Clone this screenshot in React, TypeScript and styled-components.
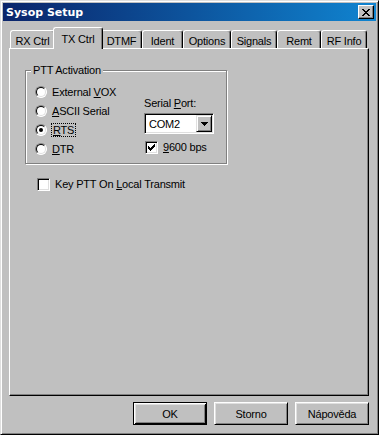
import styled, { createGlobalStyle } from 'styled-components';

const GlobalStyle = createGlobalStyle`
  html, body {
    margin: 0;
    padding: 0;
    background: #c0c0c0;
  }
  body {
    font-family: 'Liberation Sans', Arial, sans-serif;
    font-size: 11px;
    letter-spacing: -0.2px;
    color: #000;
  }
  * {
    box-sizing: border-box;
  }
`;

const tabs = [
  { label: 'RX Ctrl', width: 45 },
  { label: 'TX Ctrl', width: 46, active: true },
  { label: 'DTMF', width: 41 },
  { label: 'Ident', width: 41 },
  { label: 'Options', width: 48 },
  { label: 'Signals', width: 46 },
  { label: 'Remt', width: 44 },
  { label: 'RF Info', width: 46 }
];

const CheckMark = () => (
  <svg width='7' height='7' viewBox='0 0 7 7' shapeRendering='crispEdges'>
    <path d='M6 0h1v3h-1v1h-1v1h-1v1h-1v1h-1v-1h-1v-1h-1v-3h1v1h1v1h1v-1h1v-1h1z' fill='#000' />
  </svg>
);

const App: React.FC = () => {
  return (
    <>
      <GlobalStyle />
      <Window>
        <TitleBar>
          <span>Sysop Setup</span>
          <CloseButton>
            <svg width='8' height='7' viewBox='0 0 8 7' shapeRendering='crispEdges'>
              <path
                d='M0 0h2v1h1v1h2v-1h1v-1h2v1h-1v1h-1v1h-1v1h1v1h1v1h1v1h-2v-1h-1v-1h-2v1h-1v1h-2v-1h1v-1h1v-1h1v-1h-1v-1h-1v-1h-1z'
                fill='#000'
              />
            </svg>
          </CloseButton>
        </TitleBar>
        <Body>
          <TabRow>
            {tabs.map((t) => (
              <Tab key={t.label} $width={t.width} $active={t.active}>
                {t.label}
              </Tab>
            ))}
          </TabRow>
          <Panel>
            <GroupBox>
              <Legend>PTT Activation</Legend>
              <GroupBody>
                <RadioList>
                  <Option>
                    <RadioMark />
                    <span>
                      External <Mnemonic>V</Mnemonic>OX
                    </span>
                  </Option>
                  <Option>
                    <RadioMark />
                    <span>
                      <Mnemonic>A</Mnemonic>SCII Serial
                    </span>
                  </Option>
                  <Option>
                    <RadioMark $checked />
                    <Focused>
                      <Mnemonic>R</Mnemonic>TS
                    </Focused>
                  </Option>
                  <Option>
                    <RadioMark />
                    <span>
                      <Mnemonic>D</Mnemonic>TR
                    </span>
                  </Option>
                </RadioList>
                <PortColumn>
                  <FieldLabel>
                    Serial <Mnemonic>P</Mnemonic>ort:
                  </FieldLabel>
                  <Combo>
                    <ComboValue>COM2</ComboValue>
                    <ComboButton>
                      <svg width='7' height='4' viewBox='0 0 7 4' shapeRendering='crispEdges'>
                        <path d='M0 0h7v1h-1v1h-1v1h-1v1h-1v-1h-1v-1h-1v-1h-1z' fill='#000' />
                      </svg>
                    </ComboButton>
                  </Combo>
                  <CheckRow $indent={1} $top={6}>
                    <CheckBox>
                      <CheckMark />
                    </CheckBox>
                    <span>
                      <Mnemonic>9</Mnemonic>600 bps
                    </span>
                  </CheckRow>
                </PortColumn>
              </GroupBody>
            </GroupBox>
            <CheckRow $indent={12} $top={13}>
              <CheckBox />
              <span>
                Key PTT On <Mnemonic>L</Mnemonic>ocal Transmit
              </span>
            </CheckRow>
          </Panel>
          <ButtonRow>
            <Button $default>OK</Button>
            <Button>Storno</Button>
            <Button>Nápověda</Button>
          </ButtonRow>
        </Body>
      </Window>
    </>
  );
};

export default App;

const Window = styled.div`
  width: 379px;
  height: 435px;
  display: flex;
  flex-direction: column;
  padding: 2px;
  background: #c0c0c0;
  border: 1px solid;
  border-color: #dfdfdf #000 #000 #dfdfdf;
  box-shadow: inset 1px 1px #fff, inset -1px -1px #808080;
`;

const TitleBar = styled.div`
  height: 18px;
  flex: none;
  display: flex;
  align-items: center;
  justify-content: space-between;
  padding: 0 2px 0 3px;
  background: linear-gradient(to right, #0a246a, #1084d0);
  color: #fff;
  font-family: 'DejaVu Sans', 'Liberation Sans', sans-serif;
  font-weight: bold;
  font-size: 11px;
  letter-spacing: 0;
`;

const CloseButton = styled.div`
  width: 16px;
  height: 14px;
  display: flex;
  align-items: center;
  justify-content: center;
  background: #c0c0c0;
  border: 1px solid;
  border-color: #fff #000 #000 #fff;
  box-shadow: inset -1px -1px #808080;
`;

const Body = styled.div`
  flex: 1;
  display: flex;
  flex-direction: column;
  padding: 6px 7px 7px 6px;
`;

const TabRow = styled.div`
  height: 21px;
  flex: none;
  display: flex;
  align-items: flex-end;
  padding-left: 1px;
  position: relative;
  z-index: 1;
`;

const Tab = styled.div<{ $width: number; $active?: boolean }>`
  width: ${(p) => p.$width + (p.$active ? 4 : 0)}px;
  height: ${(p) => (p.$active ? 22 : 18)}px;
  margin: 0 ${(p) => (p.$active ? -2 : 0)}px ${(p) => (p.$active ? -1 : 0)}px;
  padding-top: ${(p) => (p.$active ? 0 : 2)}px;
  display: flex;
  align-items: center;
  justify-content: center;
  background: #c0c0c0;
  border: 1px solid;
  border-bottom: none;
  border-color: #fff #000 #000 #fff;
  border-radius: 3px 3px 0 0;
  box-shadow: inset -1px 0 #808080;
  position: relative;
  z-index: ${(p) => (p.$active ? 2 : 1)};
  white-space: nowrap;
`;

const Panel = styled.div`
  flex: 1;
  display: flex;
  flex-direction: column;
  align-items: flex-start;
  padding: 15px 0 0 15px;
  border: 1px solid;
  border-color: #fff #000 #000 #fff;
  box-shadow: inset -1px -1px #808080;
`;

const GroupBox = styled.fieldset`
  width: 202px;
  margin: 0;
  padding: 0;
  border: 1px solid #808080;
  box-shadow: 1px 1px 0 #fff, inset 1px 1px 0 #fff;
  min-inline-size: 0;
`;

const Legend = styled.legend`
  margin-left: 5px;
  padding: 0 2px;
  line-height: 13px;
  background: #c0c0c0;
`;

const GroupBody = styled.div`
  display: grid;
  grid-template-columns: 109px 1fr;
  padding: 5px 0 5px 9px;
`;

const RadioList = styled.div`
  display: flex;
  flex-direction: column;
`;

const Option = styled.div`
  height: 19px;
  display: flex;
  align-items: center;
  gap: 5px;
  white-space: nowrap;
`;

const RadioMark = styled.span<{ $checked?: boolean }>`
  flex: none;
  position: relative;
  width: 12px;
  height: 12px;
  border-radius: 50%;
  background: #fff;
  border: 1px solid;
  border-color: #808080 #fff #fff #808080;

  &::before {
    content: '';
    position: absolute;
    inset: 0;
    border-radius: 50%;
    border: 1px solid;
    border-color: #000 #dfdfdf #dfdfdf #000;
  }

  &::after {
    content: '';
    display: ${(p) => (p.$checked ? 'block' : 'none')};
    position: absolute;
    left: 3px;
    top: 3px;
    width: 4px;
    height: 4px;
    border-radius: 50%;
    background: #000;
  }
`;

const Focused = styled.span`
  outline: 1px dotted #000;
  padding: 0 1px;
`;

const Mnemonic = styled.span`
  text-decoration: underline;
`;

const PortColumn = styled.div`
  display: flex;
  flex-direction: column;
  align-items: flex-start;
  padding-top: 15px;
`;

const FieldLabel = styled.div`
  line-height: 13px;
  white-space: nowrap;
`;

const Combo = styled.div`
  width: 70px;
  height: 21px;
  margin-top: 3px;
  display: flex;
  align-items: center;
  padding: 1px;
  background: #fff;
  border: 1px solid;
  border-color: #808080 #fff #fff #808080;
  box-shadow: inset 1px 1px #000, inset -1px -1px #dfdfdf;
`;

const ComboValue = styled.span`
  flex: 1;
  padding-left: 3px;
`;

const ComboButton = styled.div`
  width: 16px;
  height: 17px;
  display: flex;
  align-items: center;
  justify-content: center;
  background: #c0c0c0;
  border: 1px solid;
  border-color: #dfdfdf #000 #000 #dfdfdf;
  box-shadow: inset 1px 1px #fff, inset -1px -1px #808080;
`;

const CheckRow = styled.div<{ $indent: number; $top: number }>`
  display: flex;
  align-items: center;
  gap: 5px;
  height: 14px;
  margin: ${(p) => p.$top}px 0 0 ${(p) => p.$indent}px;
  white-space: nowrap;
`;

const CheckBox = styled.span`
  flex: none;
  width: 13px;
  height: 13px;
  display: flex;
  align-items: center;
  justify-content: center;
  background: #fff;
  border: 1px solid;
  border-color: #808080 #fff #fff #808080;
  box-shadow: inset 1px 1px #000, inset -1px -1px #dfdfdf;
`;

const ButtonRow = styled.div`
  flex: none;
  display: flex;
  justify-content: flex-end;
  gap: 7px;
  margin-top: 6px;
`;

const Button = styled.div<{ $default?: boolean }>`
  width: 74px;
  height: 23px;
  display: flex;
  align-items: center;
  justify-content: center;
  background: #c0c0c0;
  border: 1px solid;
  border-color: ${(p) => (p.$default ? '#000' : '#fff #000 #000 #fff')};
  box-shadow: ${(p) =>
    p.$default
      ? 'inset 1px 1px #fff, inset -1px -1px #000, inset 2px 2px #dfdfdf, inset -2px -2px #808080'
      : 'inset 1px 1px #dfdfdf, inset -1px -1px #808080'};
`;
